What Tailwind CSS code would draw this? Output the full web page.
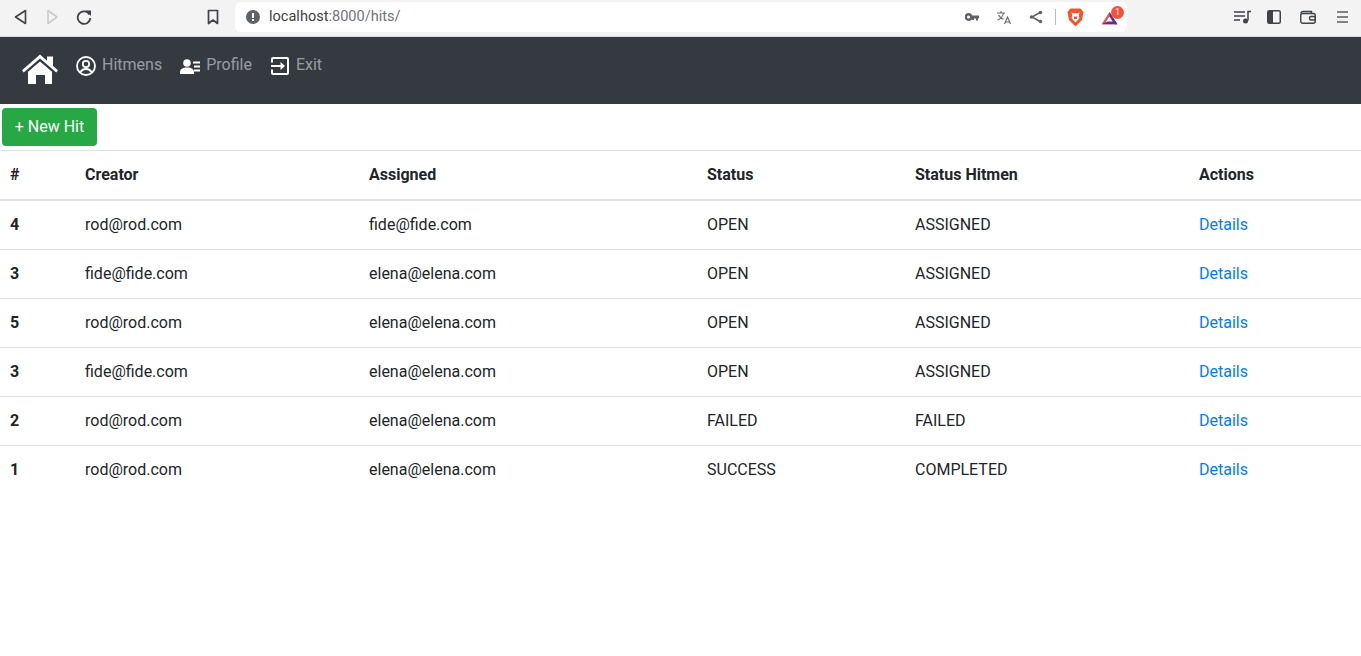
<!DOCTYPE html>
<html lang="en">
  <head>
    <meta charset="UTF-8" />
    <meta name="viewport" content="width=device-width, initial-scale=1.0" />
    <title>Hits</title>
    <script src="https://cdn.jsdelivr.net/npm/@tailwindcss/browser@4"></script>
  </head>
  <body class="bg-white text-[#212529] font-['Roboto',sans-serif] text-base min-h-screen overflow-hidden">
    <!-- browser toolbar -->
    <div class="h-[37px] bg-[#f3f3f3] border-b border-[#d8d8d8] pb-[2px] flex items-center relative">
      <div class="flex items-center pl-[12px] gap-[15px]">
        <svg width="16" height="16" viewBox="0 0 16 16" fill="none" stroke="#3f4247" stroke-width="1.600" stroke-linejoin="round"><path d="M13.500 1.500v13L3.500 8z"/></svg>
        <svg width="16" height="16" viewBox="0 0 16 16" fill="none" stroke="#c9cacc" stroke-width="1.600" stroke-linejoin="round"><path d="M5 1.500v13L14 8z"/></svg>
        <svg width="18" height="16" viewBox="0 0 18 16" fill="none" stroke="#3f4247" stroke-width="1.800"><path d="M15.500 5.500A6.300 6.300 0 1 0 16.300 9"/><path d="M11.500 1.500h5.500v5.500z" fill="#3f4247" stroke="none"/></svg>
      </div>
      <svg class="ml-[114px]" width="14" height="16" viewBox="0 0 14 16" fill="none" stroke="#3f4247" stroke-width="1.700" stroke-linejoin="round"><path d="M2.500 1.500h9v13L7 11l-4.500 3.500z"/></svg>
      <div class="ml-[15px] w-[892px] h-[30px] bg-white rounded-[6px] flex items-center">
        <svg class="ml-[11px]" width="14" height="14" viewBox="0 0 14 14"><circle cx="7" cy="7" r="7" fill="#5f6368"/><rect x="6" y="3" width="2" height="5" fill="#fff"/><rect x="6" y="9" width="2" height="2" fill="#fff"/></svg>
        <span class="ml-[9px] text-[14.550px] text-[#70757a]"><span class="text-[#3c4043]">localhost</span>:8000/hits/</span>
        <div class="ml-auto flex items-center">
          <svg width="14" height="8" viewBox="0 0 14 8"><circle cx="3.500" cy="4" r="2.700" fill="none" stroke="#5f6368" stroke-width="2.400"/><path d="M6 2.500h8v3h-1v2h-2v-2H9v1.500H7V5.500H6z" fill="#5f6368"/></svg>
          <svg class="ml-[17px]" width="16" height="15" viewBox="0 0 16 15" fill="none" stroke="#6a6d72" stroke-width="1.200"><path d="M1 3h8M5 1v2M7.500 3C7 6 4 9 1.500 10M2.500 5c1 2 3 3.500 5 4.500"/><path d="M8.500 14l3-7 3 7M9.500 12h4"/></svg>
          <svg class="ml-[17px]" width="14" height="14" viewBox="0 0 14 14" fill="none" stroke="#5f6368" stroke-width="1.500"><path d="M11 2.500L3 7l8 4.500"/><circle cx="11.500" cy="2.500" r="1.800" fill="#5f6368" stroke="none"/><circle cx="2.500" cy="7" r="1.800" fill="#5f6368" stroke="none"/><circle cx="11.500" cy="11.500" r="1.800" fill="#5f6368" stroke="none"/></svg>
          <div class="ml-[12px] w-px h-[16px] bg-[#b9b9b9]"></div>
          <svg class="ml-[11px]" width="17" height="19" viewBox="0 0 17 19"><path d="M3.500 0.500h10l3 3.500-1.500 8-6.500 6.500L2 12 .5 4z" fill="#f1562b"/><path d="M4.500 4.500l2 .8h4l2-.8-.8 3.500.8 2L8.500 14.500 4.500 10l.8-2z" fill="#fff"/><path d="M7 8.500h3v2.500H7z" fill="#f1562b"/></svg>
          <div class="ml-[16px] mr-[3px] relative w-[24px] h-[18px]">
            <svg width="19" height="14" viewBox="0 0 20 16" class="absolute left-0 bottom-[1px]"><path d="M10 1L1 15h18z" fill="#e2574c"/><path d="M10 6l-5 8h10z" fill="#fff"/><path d="M1 15h18l-2-3H8z" fill="#662d91"/><path d="M10 1l9 14h-3.500L10 6z" fill="#662d91"/></svg>
            <span class="absolute right-0 top-[-2px] w-[13px] h-[13px] rounded-full bg-[#f4503c] text-white text-[9px] leading-[13px] text-center">1</span>
          </div>
        </div>
      </div>
      <div class="ml-[107px] flex items-center">
        <svg width="17" height="14" viewBox="0 0 17 14" fill="none" stroke="#3f4247" stroke-width="1.500"><path d="M0 2h11M0 6h11M0 10h6"/><path d="M14 10.500V1.500h3"/><circle cx="11.500" cy="11" r="2.500" fill="#3f4247" stroke="none"/></svg>
        <svg class="ml-[16px]" width="14" height="14" viewBox="0 0 14 14"><rect x=".75" y=".75" width="12.500" height="12.500" rx="1.500" fill="none" stroke="#3f4247" stroke-width="1.500"/><rect x="1" y="1" width="5" height="12" fill="#3f4247"/></svg>
        <svg class="ml-[19px]" width="16" height="14" viewBox="0 0 16 14" fill="none" stroke="#3f4247" stroke-width="1.400"><path d="M1 3.500A2 2 0 0 1 3 1.500h8.500V4"/><rect x=".75" y="3.500" width="14.500" height="9.800" rx="2"/><rect x="9.500" y="6.500" width="6" height="3.500" rx="1.500"/></svg>
        <svg class="ml-[21px]" width="11" height="12" viewBox="0 0 11 12" fill="none" stroke="#5b5e63" stroke-width="1.700"><path d="M0 1h11M0 6h11M0 11h11"/></svg>
      </div>
    </div>

    <!-- navbar -->
    <nav class="h-[67px] bg-[#343a40] flex items-start pl-[22px] pt-[17px]">
      <a href="#" class="block">
        <svg width="36" height="30" viewBox="0 0 36 30" fill="#fff"><path d="M18 .500L25 6.700V2.500h6v9.500l5 4.300-1.700 2.200L18 4.500 1.700 18.500 0 16.300z"/><path d="M18 7.500L6 17.800V30h8v-9h9v9h7V17.800z"/></svg>
      </a>
      <a href="#" class="ml-[18px] flex items-center text-white/50">
        <svg width="20" height="20" viewBox="0 0 20 20" fill="none" stroke="#fff" stroke-width="1.800"><circle cx="10" cy="10" r="9"/><circle cx="10" cy="8" r="3.200"/><path d="M4.500 16.500c1-2.700 3-3.500 5.500-3.500s4.500.8 5.500 3.500"/></svg>
        <span class="ml-[6px] leading-[24px] relative top-[-1px]">Hitmens</span>
      </a>
      <a href="#" class="ml-[18px] flex items-center text-white/50">
        <svg width="20" height="15" viewBox="0 0 20 15" fill="#fff"><circle cx="7" cy="4" r="3.800"/><path d="M0 15v-1.500C0 10 2.500 8.500 7 8.500s7 1.500 7 5V15z"/><rect x="13" y="2.500" width="7" height="2"/><rect x="14" y="6.500" width="6" height="2"/><rect x="14" y="10.500" width="6" height="2"/></svg>
        <span class="ml-[6px] leading-[24px] relative top-[-1px]">Profile</span>
      </a>
      <a href="#" class="ml-[19px] flex items-center text-white/50">
        <svg width="18" height="18" viewBox="0 0 18 18" fill="none" stroke="#fff" stroke-width="2"><path d="M1 5.500V2a1 1 0 0 1 1-1h14a1 1 0 0 1 1 1v14a1 1 0 0 1-1 1H2a1 1 0 0 1-1-1v-3.500"/><path d="M0 9h10"/><path d="M9.500 5l4.500 4-4.500 4z" fill="#fff" stroke="none"/></svg>
        <span class="ml-[7px] leading-[24px] relative top-[-1px]">Exit</span>
      </a>
    </nav>

    <!-- new hit button -->
    <div class="pl-[2px] pt-[4px] h-[46px]">
      <a href="#" class="inline-block h-[38px] w-[95px] text-center leading-[38px] bg-[#28a745] text-white rounded-[4px]">+ New Hit</a>
    </div>

    <table class="w-full table-fixed border-collapse text-left">
      <colgroup>
        <col class="w-[73px]" />
        <col class="w-[284px]" />
        <col class="w-[338px]" />
        <col class="w-[208px]" />
        <col class="w-[284px]" />
        <col />
      </colgroup>
      <thead>
        <tr class="h-[49px] border-t border-b-2 border-[#dee2e6]">
          <th class="pl-[10px] font-bold">#</th>
          <th class="pl-[12px] font-bold">Creator</th>
          <th class="pl-[12px] font-bold">Assigned</th>
          <th class="pl-[12px] font-bold">Status</th>
          <th class="pl-[12px] font-bold">Status Hitmen</th>
          <th class="pl-[12px] font-bold">Actions</th>
        </tr>
      </thead>
      <tbody>
        <tr class="h-[50px] border-b border-[#dee2e6]">
          <th class="pl-[10px] font-bold">4</th>
          <td class="pl-[12px]">rod@rod.com</td>
          <td class="pl-[12px]">fide@fide.com</td>
          <td class="pl-[12px]">OPEN</td>
          <td class="pl-[12px]">ASSIGNED</td>
          <td class="pl-[12px]"><a href="#" class="text-[#007bff]">Details</a></td>
        </tr>
        <tr class="h-[49px] border-b border-[#dee2e6]">
          <th class="pl-[10px] font-bold">3</th>
          <td class="pl-[12px]">fide@fide.com</td>
          <td class="pl-[12px]">elena@elena.com</td>
          <td class="pl-[12px]">OPEN</td>
          <td class="pl-[12px]">ASSIGNED</td>
          <td class="pl-[12px]"><a href="#" class="text-[#007bff]">Details</a></td>
        </tr>
        <tr class="h-[49px] border-b border-[#dee2e6]">
          <th class="pl-[10px] font-bold">5</th>
          <td class="pl-[12px]">rod@rod.com</td>
          <td class="pl-[12px]">elena@elena.com</td>
          <td class="pl-[12px]">OPEN</td>
          <td class="pl-[12px]">ASSIGNED</td>
          <td class="pl-[12px]"><a href="#" class="text-[#007bff]">Details</a></td>
        </tr>
        <tr class="h-[49px] border-b border-[#dee2e6]">
          <th class="pl-[10px] font-bold">3</th>
          <td class="pl-[12px]">fide@fide.com</td>
          <td class="pl-[12px]">elena@elena.com</td>
          <td class="pl-[12px]">OPEN</td>
          <td class="pl-[12px]">ASSIGNED</td>
          <td class="pl-[12px]"><a href="#" class="text-[#007bff]">Details</a></td>
        </tr>
        <tr class="h-[49px] border-b border-[#dee2e6]">
          <th class="pl-[10px] font-bold">2</th>
          <td class="pl-[12px]">rod@rod.com</td>
          <td class="pl-[12px]">elena@elena.com</td>
          <td class="pl-[12px]">FAILED</td>
          <td class="pl-[12px]">FAILED</td>
          <td class="pl-[12px]"><a href="#" class="text-[#007bff]">Details</a></td>
        </tr>
        <tr class="h-[49px]">
          <th class="pl-[10px] font-bold">1</th>
          <td class="pl-[12px]">rod@rod.com</td>
          <td class="pl-[12px]">elena@elena.com</td>
          <td class="pl-[12px]">SUCCESS</td>
          <td class="pl-[12px]">COMPLETED</td>
          <td class="pl-[12px]"><a href="#" class="text-[#007bff]">Details</a></td>
        </tr>
      </tbody>
    </table>
  </body>
</html>
